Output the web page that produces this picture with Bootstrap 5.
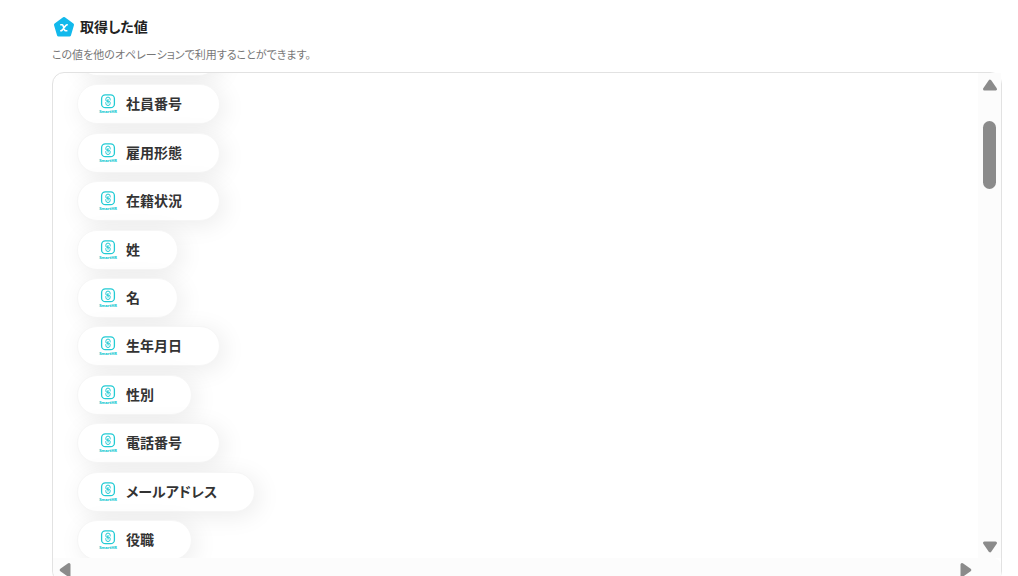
<!DOCTYPE html>
<html lang="ja">
<head>
<meta charset="utf-8">
<meta name="viewport" content="width=device-width, initial-scale=1">
<title>取得した値</title>
<link href="https://cdn.jsdelivr.net/npm/bootstrap@5.3.0/dist/css/bootstrap.min.css" rel="stylesheet">
<style>
body{font-family:"Noto Sans CJK JP",sans-serif;font-feature-settings:"palt";color:#222;background:#fff}
.page{padding:15px 16px 0 52px}
.page-title{font-size:14px;line-height:22px;font-weight:700}
.page-note{font-size:11px;line-height:18px;color:#777;margin-bottom:9px}
.panel{display:grid;grid-template-columns:minmax(0,1fr) 23px;grid-template-rows:minmax(0,1fr) 24px;border:1px solid #e2e2e2;border-radius:12px;margin-bottom:-7px;min-height:0}
.viewport-area{overflow:hidden;border-radius:12px 0 0 0;padding-left:24px}
.chip-list{height:524px;margin-top:-37px}
.chip{height:40px;padding:0 37px 2px 20px;border:1px solid #f6f6f6;border-radius:20px;background:#fff;box-shadow:4px 4px 24px rgba(0,0,0,.08);font-size:14px;line-height:20px;font-weight:700;font-feature-settings:inherit;color:#333}
.chip-list li{position:relative;height:40px}
.chip-blank{width:142px}
.track{background:#fcfcfc}
.track button{border:0;padding:0;background:none;line-height:0;color:#8b8b8b}
.track-v{padding:6px 0 5px}
.track-h{padding:0 6px;border-radius:0 0 0 12px}
.thumb{width:13px;height:68px;border-radius:7px;background:#8b8b8b;margin-top:30px}
</style>
</head>
<body>
<svg class="d-none" aria-hidden="true">
  <symbol id="smarthr" viewBox="0 -1 20 20" overflow="visible">
    <rect x="3.6" y=".9" width="12.800" height="12.800" rx="3.800" fill="none" stroke="#22cbd4" stroke-width="1.300"/>
    <path d="M12.200 6.400V5.300a2.200 2.200 0 0 0-4.400 0v.7c0 .7.400 1.100 1 1.300l2.400.9M7.800 8.200V9.300a2.200 2.200 0 0 0 4.400 0v-.7c0-.7-.4-1.100-1-1.300l-2.400-.9M10 5v1.400M10 8.200v1.400" fill="none" stroke="#22cbd4" stroke-width="1"/>
    <text x="10" y="18.500" text-anchor="middle" font-family="Noto Sans,sans-serif" font-size="4" font-weight="700" fill="#22cbd4" stroke="#22cbd4" stroke-width=".1">SmartHR</text>
  </symbol>
</svg>
<main class="page vh-100 overflow-hidden d-flex flex-column">
  <header>
    <div class="d-flex align-items-center">
      <svg width="24" height="22" viewBox="0 0 24 22" class="me-1" aria-hidden="true">
        <path d="M12 3.500 20.500 9.800 17.500 20H6.500L3.500 9.800z" fill="#12b9ec" stroke="#12b9ec" stroke-width="3" stroke-linejoin="round"/>
        <path d="M8.200 9.700h1.800q.7 0 1 .8l1.600 4.400q.3.900 1.100.9h1.700M15.800 9.700h-.5q-.8 0-1.500.9l-3.400 4.300q-.8.900-1.600.9h-.6" fill="none" stroke="#fff" stroke-width="1.600"/>
      </svg>
      <h1 class="page-title mb-0">取得した値</h1>
    </div>
    <p class="page-note mt-2">この値を他のオペレーションで利用することができます。</p>
  </header>
  <section class="panel flex-grow-1">
    <div class="viewport-area">
      <ul class="chip-list list-unstyled mb-0 d-flex flex-column justify-content-between align-items-start">
        <li class="chip chip-blank"></li>
        <li><button type="button" class="chip d-flex align-items-center gap-2"><svg width="20" height="20" aria-hidden="true"><use href="#smarthr"/></svg>社員番号</button></li>
        <li><button type="button" class="chip d-flex align-items-center gap-2"><svg width="20" height="20" aria-hidden="true"><use href="#smarthr"/></svg>雇用形態</button></li>
        <li><button type="button" class="chip d-flex align-items-center gap-2"><svg width="20" height="20" aria-hidden="true"><use href="#smarthr"/></svg>在籍状況</button></li>
        <li><button type="button" class="chip d-flex align-items-center gap-2"><svg width="20" height="20" aria-hidden="true"><use href="#smarthr"/></svg>姓</button></li>
        <li><button type="button" class="chip d-flex align-items-center gap-2"><svg width="20" height="20" aria-hidden="true"><use href="#smarthr"/></svg>名</button></li>
        <li><button type="button" class="chip d-flex align-items-center gap-2"><svg width="20" height="20" aria-hidden="true"><use href="#smarthr"/></svg>生年月日</button></li>
        <li><button type="button" class="chip d-flex align-items-center gap-2"><svg width="20" height="20" aria-hidden="true"><use href="#smarthr"/></svg>性別</button></li>
        <li><button type="button" class="chip d-flex align-items-center gap-2"><svg width="20" height="20" aria-hidden="true"><use href="#smarthr"/></svg>電話番号</button></li>
        <li><button type="button" class="chip d-flex align-items-center gap-2"><svg width="20" height="20" aria-hidden="true"><use href="#smarthr"/></svg>メールアドレス</button></li>
        <li><button type="button" class="chip d-flex align-items-center gap-2"><svg width="20" height="20" aria-hidden="true"><use href="#smarthr"/></svg>役職</button></li>
      </ul>
    </div>
    <div class="track track-v d-flex flex-column align-items-center">
      <button type="button" aria-label="上へ"><svg width="16" height="12" viewBox="0 0 16 12"><path d="M8 2.200 13.500 10h-11z" fill="currentColor" stroke="currentColor" stroke-width="3" stroke-linejoin="round"/></svg></button>
      <div class="thumb"></div>
      <button type="button" class="mt-auto" aria-label="下へ"><svg width="16" height="12" viewBox="0 0 16 12"><path d="M8 9.800 2.500 2h11z" fill="currentColor" stroke="currentColor" stroke-width="3" stroke-linejoin="round"/></svg></button>
    </div>
    <div class="track track-h d-flex justify-content-between align-items-center">
      <button type="button" aria-label="左へ"><svg width="12" height="16" viewBox="0 0 12 16"><path d="M2.200 8 10 2.500v11z" fill="currentColor" stroke="currentColor" stroke-width="3" stroke-linejoin="round"/></svg></button>
      <button type="button" aria-label="右へ"><svg width="12" height="16" viewBox="0 0 12 16"><path d="M9.800 8 2 2.500v11z" fill="currentColor" stroke="currentColor" stroke-width="3" stroke-linejoin="round"/></svg></button>
    </div>
    <div class="track rounded-end-3"></div>
  </section>
</main>
<script src="https://cdn.jsdelivr.net/npm/bootstrap@5.3.0/dist/js/bootstrap.bundle.min.js"></script>
</body>
</html>
